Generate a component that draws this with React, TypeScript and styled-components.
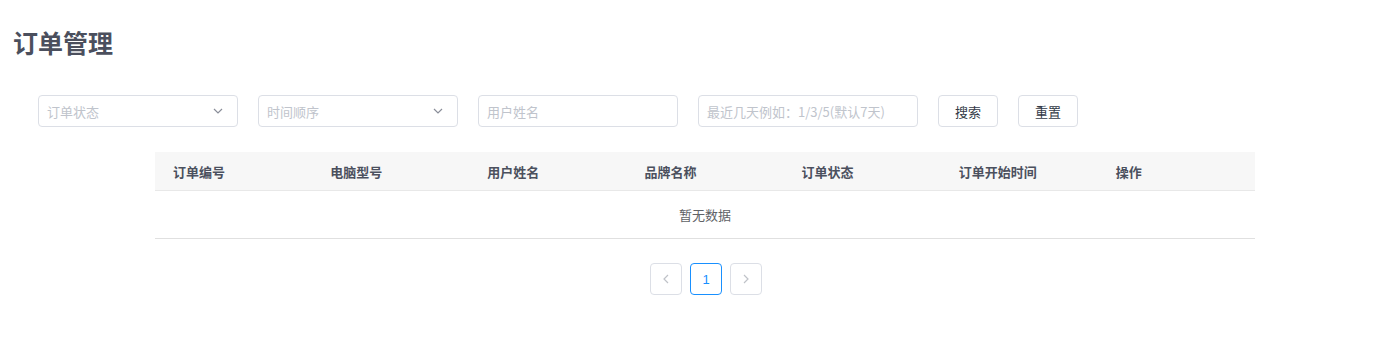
import styled, { createGlobalStyle } from 'styled-components';

const GlobalStyle = createGlobalStyle`
  body {
    margin: 0;
    background: #ffffff;
    font-family: "Noto Sans CJK SC", "Noto Sans", sans-serif;
  }
`

const Page = styled.div`
  width: 1387px;
  height: 343px;
  overflow: hidden;
  background: #ffffff;
`

const Title = styled.h2`
  margin: 0;
  padding: 24px 0 0 13px;
  height: 40px;
  font-size: 25px;
  line-height: 36px;
  font-weight: 700;
  color: #4b4f5d;
`

const FilterBar = styled.div`
  display: flex;
  gap: 20px;
  padding: 31px 0 0 38px;
`

const Field = styled.div`
  position: relative;
  box-sizing: border-box;
  width: ${(p: { $w?: number }) => p.$w ?? 200}px;
  height: 32px;
  border: 1px solid #dcdfe6;
  border-radius: 4px;
  display: flex;
  align-items: center;
  justify-content: space-between;
  padding: 0 14px 0 8px;
  font-size: 13px;
  color: #c0c4cc;
`

const Chevron = () => (
  <svg width="10" height="6" viewBox="0 0 10 6">
    <path d="M1 1l4 4 4-4" fill="none" stroke="#8a8e99" strokeWidth="1.2" />
  </svg>
)

const Button = styled.div`
  box-sizing: border-box;
  width: 60px;
  height: 32px;
  border: 1px solid #dcdfe6;
  border-radius: 4px;
  display: flex;
  align-items: center;
  justify-content: center;
  font-size: 13px;
  color: #333a47;
`

const Table = styled.div`
  width: 1100px;
  margin: 25px 0 0 155px;
`

const HeaderRow = styled.div`
  display: grid;
  grid-template-columns: repeat(7, 1fr);
  height: 38px;
  background: #f7f7f7;
  border-bottom: 1px solid #e8e8e8;
`

const HeaderCell = styled.div`
  display: flex;
  align-items: center;
  padding-left: 18px;
  font-size: 13px;
  font-weight: 700;
  color: #4b505e;
`

const Empty = styled.div`
  height: 47px;
  border-bottom: 1px solid #e0e0e0;
  display: flex;
  align-items: center;
  justify-content: center;
  font-size: 13px;
  color: #606266;
`

const Pager = styled.div`
  display: flex;
  justify-content: center;
  gap: 8px;
  margin: 24px 0 0 2px;
`

const PageBtn = styled.div<{ $active?: boolean }>`
  box-sizing: border-box;
  width: 32px;
  height: 32px;
  border: 1px solid ${(p) => (p.$active ? '#1890ff' : '#dcdfe6')};
  border-radius: 4px;
  display: flex;
  align-items: center;
  justify-content: center;
  font-size: 13px;
  color: ${(p) => (p.$active ? '#1890ff' : '#c0c4cc')};
  font-family: "Liberation Sans", sans-serif;
`

const Arrow = ({ left }: { left?: boolean }) => (
  <svg width="6" height="10" viewBox="0 0 6 10">
    <path d={left ? 'M5 1L1 5l4 4' : 'M1 1l4 4-4 4'} fill="none" stroke="#bfc2c8" strokeWidth="1.2" />
  </svg>
)

const columns = ['订单编号', '电脑型号', '用户姓名', '品牌名称', '订单状态', '订单开始时间', '操作']

export default function App() {
  return (
    <Page>
      <GlobalStyle />
      <Title>订单管理</Title>
      <FilterBar>
        <Field>订单状态<Chevron /></Field>
        <Field>时间顺序<Chevron /></Field>
        <Field>用户姓名</Field>
        <Field $w={220}>最近几天例如：1/3/5(默认7天)</Field>
        <Button>搜索</Button>
        <Button>重置</Button>
      </FilterBar>
      <Table>
        <HeaderRow>
          {columns.map((c) => (
            <HeaderCell key={c}>{c}</HeaderCell>
          ))}
        </HeaderRow>
        <Empty>暂无数据</Empty>
        <Pager>
          <PageBtn><Arrow left /></PageBtn>
          <PageBtn $active>1</PageBtn>
          <PageBtn><Arrow /></PageBtn>
        </Pager>
      </Table>
    </Page>
  )
}
